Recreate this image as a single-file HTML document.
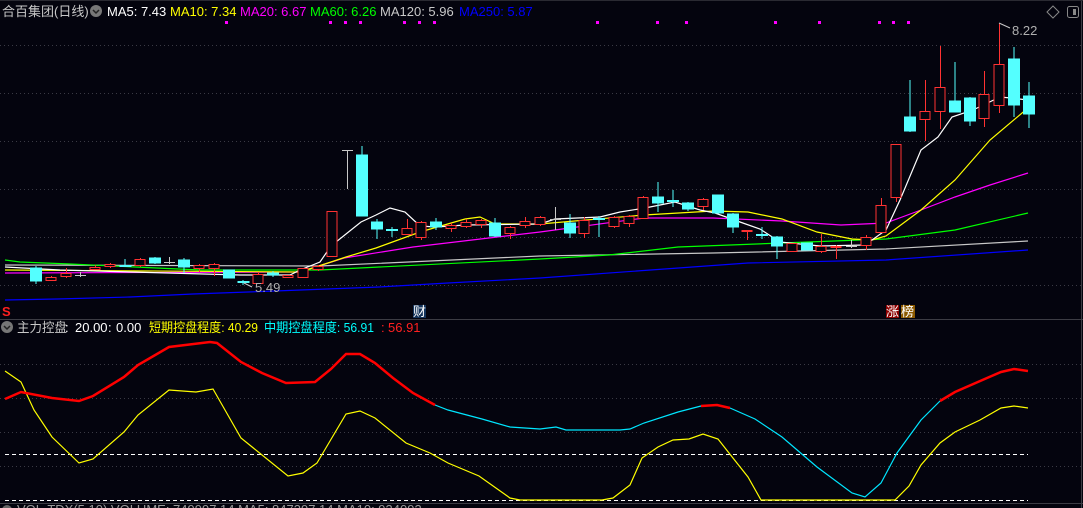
<!DOCTYPE html>
<html><head><meta charset="utf-8"><style>
html,body{margin:0;padding:0;background:#04040e;width:1083px;height:508px;overflow:hidden}
svg{display:block}
text{font-family:"Liberation Sans","Noto Sans CJK SC",sans-serif;font-size:13px}
</style></head><body>
<svg width="1083" height="508" viewBox="0 0 1083 508" xmlns="http://www.w3.org/2000/svg">
<rect width="1083" height="508" fill="#04040e"/>
<g stroke="#3a3a44" stroke-width="1" stroke-dasharray="1,3">
<line x1="0" y1="45.5" x2="1081" y2="45.5"/><line x1="0" y1="93.5" x2="1081" y2="93.5"/>
<line x1="0" y1="141.5" x2="1081" y2="141.5"/><line x1="0" y1="189.5" x2="1081" y2="189.5"/>
<line x1="0" y1="237.5" x2="1081" y2="237.5"/><line x1="0" y1="285.5" x2="1081" y2="285.5"/>
<line x1="0" y1="364.5" x2="1081" y2="364.5"/><line x1="0" y1="398.5" x2="1081" y2="398.5"/>
<line x1="0" y1="432.5" x2="1081" y2="432.5"/><line x1="0" y1="466.5" x2="1081" y2="466.5"/>
</g>
<line x1="0" y1="319.5" x2="1083" y2="319.5" stroke="#3c3c44"/>
<line x1="0" y1="503.5" x2="1083" y2="503.5" stroke="#3c3c44"/>
<line x1="1081.5" y1="0" x2="1081.5" y2="508" stroke="#3c3c44"/>
<line x1="0" y1="0.5" x2="1083" y2="0.5" stroke="#2a2a32"/>
<text x="2" y="16" fill="#c8c8c8">合百集团(日线)</text>
<circle cx="96" cy="11" r="6" fill="#777"/><path d="M93 10l3 3 3-3" stroke="#222" stroke-width="1.5" fill="none"/>
<text x="107" y="16" fill="#ffffff">MA5: 7.43</text>
<text x="170" y="16" fill="#ffff00">MA10: 7.34</text>
<text x="240" y="16" fill="#ff00ff">MA20: 6.67</text>
<text x="310" y="16" fill="#00ff00">MA60: 6.26</text>
<text x="380" y="16" fill="#c8c8c8">MA120: 5.96</text>
<text x="459" y="16" fill="#0000ff">MA250: 5.87</text>
<path d="M1053 6l6 6-6 6-6-6z" stroke="#888" fill="none"/>
<rect x="1067.5" y="6.5" width="11" height="11" rx="2" stroke="#888" fill="none"/><rect x="1073" y="9" width="3" height="6" fill="#888"/>
<g fill="#ff00ff">
<rect x="225" y="21" width="3" height="3"/><rect x="329" y="21" width="3" height="3"/><rect x="344" y="21" width="3" height="3"/><rect x="359" y="21" width="3" height="3"/>
<rect x="403" y="21" width="3" height="3"/><rect x="418" y="21" width="3" height="3"/><rect x="433" y="21" width="3" height="3"/>
<rect x="596" y="21" width="3" height="3"/><rect x="656" y="21" width="3" height="3"/><rect x="685" y="21" width="3" height="3"/>
<rect x="774" y="21" width="3" height="3"/><rect x="818" y="21" width="3" height="3"/><rect x="878" y="21" width="3" height="3"/>
<rect x="892" y="21" width="3" height="3"/><rect x="907" y="21" width="3" height="3"/>
</g>
<g fill="none" stroke-width="1.2">
<polyline stroke="#0000ff" points="5,300 57,299 130,297 193,294 275,291 379,287 448,283 540,278 748,263 886,260 1028,250"/>
<polyline stroke="#c8c8c8" points="5,265 320,266 540,256 713,253 886,249 1028,241"/>
<polyline stroke="#00ff00" points="5,260 20,262 70,264 200,270 320,270 540,259 609,255 678,247 782,243 886,239 955,230 1028,213"/>
<polyline stroke="#ff00ff" points="5,273 300,272 344,258 413,247 540,232 644,218 713,218 782,221 841,225 886,223 921,210 955,197 990,185 1028,173"/>
<polyline stroke="#ffff00" points="5,270 300,272 331,262 346,257 376,248 420,232 465,219 480,217 495,224 540,224 644,215 713,211 748,212 782,219 817,232 852,239 872,240 886,236 921,210 955,180 990,140 1028,108"/>
<polyline stroke="#ffffff" points="5,267 60,270 240,275 290,275 300,270 320,262 331,246 346,234 361,222 376,215 390,208 405,212 420,226 436,227 465,225 540,224 555,219 600,217 620,212 645,208 675,202 700,210 715,213 740,222 760,229 780,242 820,246 865,245 886,230 900,200 921,150 938,137 952,117 973,110 1000,97 1011,98 1028,100"/>
</g>
<g>
<g fill="#54ffff" stroke="#54ffff">
<line x1="36" y1="266" x2="36" y2="284"/><rect x="30.5" y="268" width="11" height="13"/>
<line x1="125" y1="259" x2="125" y2="267"/><rect x="120" y="265.5" width="11" height="1"/>
<line x1="155" y1="257" x2="155" y2="264"/><rect x="149.5" y="258" width="11" height="5"/>
<line x1="184" y1="258" x2="184" y2="273"/><rect x="178.5" y="260" width="11" height="7"/>
<rect x="223.5" y="270" width="11" height="8"/>
<line x1="243" y1="280" x2="243" y2="285"/><rect x="238" y="281.5" width="11" height="1"/>
<line x1="273" y1="271" x2="273" y2="277"/><rect x="267.5" y="273" width="11" height="2"/>
<line x1="362" y1="146" x2="362" y2="216"/><rect x="356.5" y="155" width="11" height="61"/>
<line x1="377" y1="219" x2="377" y2="239"/><rect x="371.5" y="222" width="11" height="7"/>
<line x1="392" y1="227" x2="392" y2="237"/><rect x="386.5" y="229.5" width="11" height="1"/>
<line x1="436" y1="218" x2="436" y2="230"/><rect x="430.5" y="222" width="11" height="5"/>
<line x1="495" y1="218" x2="495" y2="237"/><rect x="489.5" y="223" width="11" height="13"/>
<line x1="570" y1="214" x2="570" y2="238"/><rect x="564.5" y="223" width="11" height="10"/>
<line x1="599" y1="216" x2="599" y2="237"/><rect x="593.5" y="218.5" width="11" height="1"/>
<line x1="658" y1="182" x2="658" y2="212"/><rect x="652.5" y="197" width="11" height="6"/>
<line x1="673" y1="190" x2="673" y2="207"/><rect x="667.5" y="200.5" width="11" height="1"/>
<line x1="688" y1="202" x2="688" y2="211"/><rect x="682.5" y="203" width="11" height="6"/>
<rect x="712.5" y="195" width="11" height="18"/>
<line x1="733" y1="213" x2="733" y2="233"/><rect x="727.5" y="214" width="11" height="13"/>
<line x1="762" y1="227" x2="762" y2="239"/><rect x="756.5" y="234.5" width="11" height="1"/>
<line x1="777" y1="236" x2="777" y2="259"/><rect x="771.5" y="237" width="11" height="9"/>
<rect x="801.5" y="243" width="11" height="7"/>
<line x1="910" y1="80" x2="910" y2="132"/><rect x="904.5" y="117" width="11" height="14"/>
<line x1="955" y1="62" x2="955" y2="112"/><rect x="949.5" y="101" width="11" height="11"/>
<line x1="970" y1="97" x2="970" y2="126"/><rect x="964.5" y="98" width="11" height="23"/>
<line x1="1014" y1="47" x2="1014" y2="117"/><rect x="1008.5" y="59" width="11" height="46"/>
<line x1="1029" y1="82" x2="1029" y2="128"/><rect x="1023.5" y="96" width="11" height="18"/>
</g>
<g fill="#04040e" stroke="#ff3232">
<line x1="51.5" y1="276" x2="51.5" y2="281"/><rect x="46" y="277.5" width="10" height="3"/>
<line x1="66.5" y1="268" x2="66.5" y2="278"/><rect x="61" y="273.5" width="10" height="3"/>
<line x1="95.5" y1="265" x2="95.5" y2="270"/><rect x="90" y="267.5" width="10" height="2"/>
<line x1="110.5" y1="263" x2="110.5" y2="268"/><rect x="105" y="264.5" width="10" height="2"/>
<line x1="140.5" y1="258" x2="140.5" y2="267"/><rect x="135" y="259.5" width="10" height="6"/>
<line x1="199.5" y1="264" x2="199.5" y2="272"/><rect x="194" y="265.5" width="10" height="3"/>
<line x1="214.5" y1="263" x2="214.5" y2="276"/><rect x="209" y="264.5" width="10" height="4"/>
<line x1="258.5" y1="272" x2="258.5" y2="284"/><rect x="253" y="274.5" width="10" height="9"/>
<rect x="283" y="275.5" width="10" height="2"/>
<rect x="298" y="268.5" width="10" height="9"/>
<line x1="318.5" y1="265" x2="318.5" y2="271"/><rect x="313" y="266.5" width="10" height="3"/>
<rect x="327" y="211.5" width="10" height="45"/>
<line x1="407.5" y1="219" x2="407.5" y2="235"/><rect x="402" y="228.5" width="10" height="6"/>
<line x1="421.5" y1="221" x2="421.5" y2="240"/><rect x="416" y="222.5" width="10" height="15"/>
<line x1="451.5" y1="223" x2="451.5" y2="232"/><rect x="446" y="225.5" width="10" height="3"/>
<line x1="466.5" y1="219" x2="466.5" y2="228"/><rect x="461" y="222.5" width="10" height="4"/>
<line x1="481.5" y1="219" x2="481.5" y2="228"/><rect x="476" y="220.5" width="10" height="4"/>
<line x1="510.5" y1="226" x2="510.5" y2="239"/><rect x="505" y="227.5" width="10" height="6"/>
<line x1="525.5" y1="217" x2="525.5" y2="228"/><rect x="520" y="221.5" width="10" height="4"/>
<line x1="540.5" y1="216" x2="540.5" y2="226"/><rect x="535" y="217.5" width="10" height="7"/>
<line x1="584.5" y1="217" x2="584.5" y2="238"/><rect x="579" y="220.5" width="10" height="13"/>
<line x1="614.5" y1="216" x2="614.5" y2="228"/><rect x="609" y="217.5" width="10" height="9"/>
<line x1="629.5" y1="215" x2="629.5" y2="227"/><rect x="624" y="216.5" width="10" height="7"/>
<line x1="643.5" y1="196" x2="643.5" y2="219"/><rect x="638" y="197.5" width="10" height="21"/>
<line x1="703.5" y1="198" x2="703.5" y2="210"/><rect x="698" y="199.5" width="10" height="7"/>
<line x1="747.5" y1="230" x2="747.5" y2="240"/><rect x="742" y="230.5" width="10" height="1"/>
<rect x="787" y="243.5" width="10" height="8"/>
<line x1="821.5" y1="234" x2="821.5" y2="253"/><rect x="816" y="246.5" width="10" height="5"/>
<line x1="836.5" y1="245" x2="836.5" y2="259"/><rect x="831" y="246.5" width="10" height="1"/>
<line x1="866.5" y1="235" x2="866.5" y2="250"/><rect x="861" y="237.5" width="10" height="8"/>
<line x1="881.5" y1="198" x2="881.5" y2="233"/><rect x="876" y="205.5" width="10" height="27"/>
<line x1="896.5" y1="144" x2="896.5" y2="202"/><rect x="891" y="144.5" width="10" height="53"/>
<line x1="925.5" y1="80" x2="925.5" y2="141"/><rect x="920" y="111.5" width="10" height="8"/>
<line x1="940.5" y1="46" x2="940.5" y2="129"/><rect x="935" y="87.5" width="10" height="24"/>
<line x1="984.5" y1="71" x2="984.5" y2="127"/><rect x="979" y="94.5" width="10" height="24"/>
<line x1="999.5" y1="23" x2="999.5" y2="113"/><rect x="994" y="64.5" width="10" height="41"/>
</g>
<g stroke="#c8c8c8">
<line x1="80.5" y1="272" x2="80.5" y2="277"/><line x1="75" y1="275.5" x2="86" y2="275.5"/>
<line x1="169.5" y1="257" x2="169.5" y2="264"/><line x1="164" y1="262.5" x2="175" y2="262.5"/>
<line x1="347.5" y1="150" x2="347.5" y2="189"/><line x1="342" y1="150.5" x2="353" y2="150.5"/>
<line x1="555.5" y1="207" x2="555.5" y2="230"/><line x1="550" y1="219.5" x2="561" y2="219.5"/>
<line x1="851.5" y1="240" x2="851.5" y2="248"/><line x1="846" y1="246.5" x2="857" y2="246.5"/>
</g>
</g>
<path d="M244 283 L252 287" stroke="#c8c8c8" fill="none"/>
<text x="255" y="292" fill="#b0b0b0" font-size="12">5.49</text>
<path d="M999 23 L1010 28" stroke="#c8c8c8" fill="none"/>
<text x="1012" y="35" fill="#b0b0b0" font-size="12">8.22</text>
<text x="2" y="316" fill="#ff2020" font-size="12" font-weight="bold">S</text>
<rect x="413" y="305" width="13" height="13" fill="#14345c"/>
<text x="413" y="316" fill="#ffffff" font-size="12">财</text>
<rect x="886" y="305" width="13" height="13" fill="#8c0000"/>
<text x="886" y="316" fill="#ffffff" font-size="12">涨</text>
<rect x="901" y="305" width="14" height="13" fill="#8c5a00"/>
<text x="901" y="316" fill="#ffffff" font-size="12">榜</text>
<circle cx="7" cy="327" r="6" fill="#777"/><path d="M4 326l3 3 3-3" stroke="#222" stroke-width="1.5" fill="none"/>
<text x="17" y="332" fill="#c8c8c8" textLength="50" lengthAdjust="spacingAndGlyphs">主力控盘</text>
<text x="65" y="332" fill="#ffffff">:</text>
<text x="75" y="332" fill="#ffffff">20.00</text>
<text x="108" y="332" fill="#ffffff">:</text>
<text x="116" y="332" fill="#ffffff">0.00</text>
<text x="149" y="332" fill="#ffff00" textLength="109" lengthAdjust="spacingAndGlyphs">短期控盘程度: 40.29</text>
<text x="264" y="332" fill="#00ffff" textLength="110" lengthAdjust="spacingAndGlyphs">中期控盘程度: 56.91</text>
<text x="381" y="332" fill="#ff2020">:</text>
<text x="388" y="332" fill="#ff2020">56.91</text>
<g stroke="#ffffff" stroke-dasharray="4,3" stroke-width="1">
<line x1="5" y1="454.5" x2="1028" y2="454.5"/><line x1="5" y1="500.5" x2="1028" y2="500.5"/>
</g>
<g fill="none">
<polyline stroke="#ffff00" stroke-width="1.2" points="5,371 21,382 34,410 52,437 79,463 93,459 124,432 138,415 169,390 196,392 213,389 241,438 288,476 303,473 317,463 346,414 360,411 375,418 406,443 430,453 448,463 479,476 510,498 520,500 602,500 613,498 630,485 642,458 658,447 673,440 689,439 703,434 718,439 729,453 748,477 761,500 895,500 909,486 921,465 940,443 955,432 980,420 1001,408 1014,406 1028,408"/>
<polyline stroke="#00e6ff" stroke-width="1.2" points="435,405 448,410 482,419 510,427 540,429 556,427 566,430 620,430 630,429 644,423 678,412 701,406"/>
<polyline stroke="#00e6ff" stroke-width="1.2" points="730,408 755,419 782,437 817,467 852,493 865,497 881,483 897,453 921,420 940,401"/>
<polyline stroke="#ff0000" stroke-width="2.5" points="5,399 21,392 52,398 79,401 93,396 124,377 138,365 169,347 210,342 217,343 241,362 262,373 286,383 315,382 331,369 346,354 360,354 375,363 393,378 413,393 435,405"/>
<polyline stroke="#ff0000" stroke-width="2.5" points="701,406 717,405 730,408"/>
<polyline stroke="#ff0000" stroke-width="2.5" points="940,401 955,392 987,378 1001,372 1014,369 1028,371"/>
</g>
<circle cx="7" cy="510" r="5" fill="#666"/>
<text x="17" y="514" fill="#9a9a9a" font-size="12">VOL-TDX(5,10) VOLUME: 749997.14 MA5: 847397.14 MA10: 934093</text>
</svg>
</body></html>
